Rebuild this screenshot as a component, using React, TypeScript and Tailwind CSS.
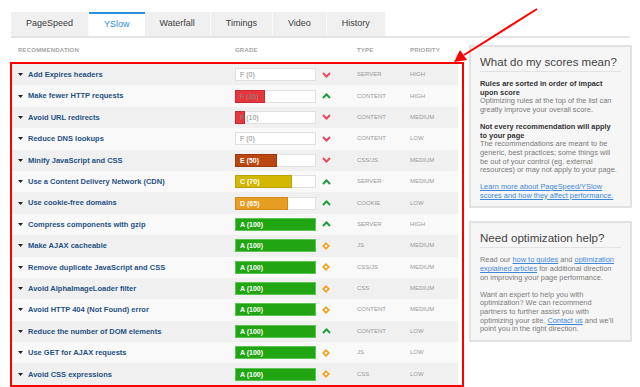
import React from 'react'

type Row = [string, string, number, 'up' | 'down' | 'diamond', string, string]

const rows: Row[] = [
  ['Add Expires headers', 'F', 0, 'down', 'SERVER', 'HIGH'],
  ['Make fewer HTTP requests', 'F', 36, 'up', 'CONTENT', 'HIGH'],
  ['Avoid URL redirects', 'F', 10, 'down', 'CONTENT', 'MEDIUM'],
  ['Reduce DNS lookups', 'F', 0, 'down', 'CONTENT', 'LOW'],
  ['Minify JavaScript and CSS', 'E', 50, 'down', 'CSS/JS', 'MEDIUM'],
  ['Use a Content Delivery Network (CDN)', 'C', 70, 'up', 'SERVER', 'MEDIUM'],
  ['Use cookie-free domains', 'D', 65, 'up', 'COOKIE', 'LOW'],
  ['Compress components with gzip', 'A', 100, 'up', 'SERVER', 'HIGH'],
  ['Make AJAX cacheable', 'A', 100, 'diamond', 'JS', 'MEDIUM'],
  ['Remove duplicate JavaScript and CSS', 'A', 100, 'diamond', 'CSS/JS', 'MEDIUM'],
  ['Avoid AlphaImageLoader filter', 'A', 100, 'diamond', 'CSS', 'MEDIUM'],
  ['Avoid HTTP 404 (Not Found) error', 'A', 100, 'diamond', 'CONTENT', 'MEDIUM'],
  ['Reduce the number of DOM elements', 'A', 100, 'up', 'CONTENT', 'LOW'],
  ['Use GET for AJAX requests', 'A', 100, 'diamond', 'JS', 'LOW'],
  ['Avoid CSS expressions', 'A', 100, 'diamond', 'CSS', 'LOW'],
]

const gradeColors: Record<string, string> = {
  F: 'bg-[#e8363c] border-[#c92a2f]',
  E: 'bg-[#b9470f] border-[#9c3a0a]',
  D: 'bg-[#e79d22] border-[#d18b15]',
  C: 'bg-[#d3b705] border-[#bca300]',
  A: 'bg-[#22a512] border-[#5cc452]',
}

const tabs = ['PageSpeed', 'YSlow', 'Waterfall', 'Timings', 'Video', 'History']

function TrendIcon({ kind }: { kind: Row[3] }) {
  if (kind === 'down')
    return (
      <svg width="9" height="6" viewBox="0 0 9 6">
        <path d="M1 1 L4.5 4.6 L8 1" stroke="#e8475d" strokeWidth="2" fill="none" />
      </svg>
    )
  if (kind === 'up')
    return (
      <svg width="9" height="6" viewBox="0 0 9 6">
        <path d="M1 5 L4.5 1.4 L8 5" stroke="#1e9a3c" strokeWidth="2" fill="none" />
      </svg>
    )
  return (
    <svg width="8" height="8" viewBox="0 0 8 8">
      <path d="M4 0 L8 4 L4 8 L0 4Z" fill="#f4a11c" />
      <circle cx="4" cy="4" r="1.3" fill="#fff" />
    </svg>
  )
}

function GradeBar({ grade, score }: { grade: string; score: number }) {
  return (
    <div className="relative w-[81px] h-[13px] bg-white border border-[#e0e0e0]">
      {score > 0 && (
        <div
          className={`absolute left-[-1px] top-[-1px] bottom-[-1px] border ${gradeColors[grade]}`}
          style={{ width: `calc(${score}% + 2px)` }}
        />
      )}
      <span
        className={`relative pl-[4px] text-[7px] leading-[11px] block ${
          score >= 50 ? 'text-white font-bold' : 'text-[#888]'
        }`}
      >
        {grade} ({score})
      </span>
    </div>
  )
}

export default function App() {
  return (
    <div className="relative w-[640px] h-[387px] overflow-hidden bg-white font-['Liberation_Sans',Arial,sans-serif]">
      <div className="pt-[12px] pl-[10px] pr-[8px]">
        {/* Tabs */}
        <div className="flex ml-[1px] mr-[2px] border-b-2 border-[#e4e4e4]">
          {tabs.map((t) =>
            t === 'YSlow' ? (
              <div
                key={t}
                className="h-[24px] px-[15px] flex items-center text-[9px] bg-white border-t-2 border-[#2b8fdc] text-[#2b8fdc]"
              >
                {t}
              </div>
            ) : (
              <div
                key={t}
                className="h-[24px] px-[15px] flex items-center text-[9px] bg-[#f0f0f0] text-[#3c3c3c] border-r border-[#fafafa]"
              >
                {t}
              </div>
            )
          )}
        </div>

        <div className="flex gap-[5px]">
          {/* Recommendations table */}
          <div className="w-[454px]">
            <div className="h-[24px] flex items-end pb-[7px] pl-[8px] text-[6px] font-bold text-[#a5a5a5] tracking-[0.2px]">
              <div className="w-[217px]">RECOMMENDATION</div>
              <div className="w-[122px]">GRADE</div>
              <div className="w-[53px]">TYPE</div>
              <div>PRIORITY</div>
            </div>
            <div className="border-2 border-[#ff0000] pr-[4px]">
              {rows.map(([name, grade, score, trend, type, prio], i) => (
                <div
                  key={name}
                  className={`h-[21.4px] flex items-center pl-[6px] ${
                    i % 2 === 0 ? 'bg-[#f0f0f0]' : 'bg-[#f9f9f9]'
                  }`}
                >
                  <div className="w-[10px] flex">
                    <svg width="5" height="3" viewBox="0 0 5 3">
                      <path d="M0 0 L5 0 L2.5 3Z" fill="#222" />
                    </svg>
                  </div>
                  <div className="w-[207px] text-[7.5px] font-bold text-[#1f5184]">{name}</div>
                  <GradeBar grade={grade} score={score} />
                  <div className="w-[41px] flex items-center pl-[6px]">
                    <TrendIcon kind={trend} />
                  </div>
                  <div className="w-[53px] text-[6px] text-[#9a9a9a]">{type}</div>
                  <div className="text-[6px] text-[#9a9a9a]">{prio}</div>
                </div>
              ))}
            </div>
          </div>

          {/* Sidebar */}
          <div className="w-[163px] mt-[7px] flex flex-col gap-[13px]">
            <div className="border-2 border-[#e2e2e2] bg-[#f6f6f6] px-[9px] pt-[8px] pb-[6px]">
              <div className="text-[11.5px] leading-[14px] text-[#444] pb-[2px] border-b border-[#e2e2e2]">
                What do my scores mean?
              </div>
              <div className="mt-[8px] text-[7.4px] leading-[8.7px]">
                <p className="font-bold text-[#333]">
                  Rules are sorted in order of impact
                  <br />
                  upon score
                </p>
                <p className="text-[#7a7a7a]">
                  Optimizing rules at the top of the list can
                  <br />
                  greatly improve your overall score.
                </p>
                <p className="font-bold text-[#333] mt-[8px]">
                  Not every recommendation will apply
                  <br />
                  to your page
                </p>
                <p className="text-[#7a7a7a]">
                  The recommendations are meant to be
                  <br />
                  generic, best practices; some things will
                  <br />
                  be out of your control (eg. external
                  <br />
                  resources) or may not apply to your page.
                </p>
                <p className="mt-[8px] text-[#3d87d6] underline">
                  Learn more about PageSpeed/YSlow
                  <br />
                  scores and how they affect performance.
                </p>
              </div>
            </div>

            <div className="border-2 border-[#e2e2e2] bg-[#f6f6f6] px-[9px] pt-[8px] pb-[6px]">
              <div className="text-[11.6px] leading-[14px] text-[#444] pb-[2px] border-b border-[#e2e2e2]">
                Need optimization help?
              </div>
              <div className="mt-[8px] text-[7.4px] leading-[8.7px] text-[#7a7a7a]">
                <p>
                  Read our <span className="text-[#3d87d6] underline">how to guides</span> and{' '}
                  <span className="text-[#3d87d6] underline">optimization</span>
                  <br />
                  <span className="text-[#3d87d6] underline">explained articles</span> for additional direction
                  <br />
                  on improving your page performance.
                </p>
                <p className="mt-[8px]">
                  Want an expert to help you with
                  <br />
                  optimization? We can recommend
                  <br />
                  partners to further assist you with
                  <br />
                  optimizing your site. <span className="text-[#3d87d6] underline">Contact us</span> and we'll
                  <br />
                  point you in the right direction.
                </p>
              </div>
            </div>
          </div>
        </div>
      </div>

      {/* Annotation arrow */}
      <svg className="absolute left-0 top-0 pointer-events-none" width="640" height="387">
        <line x1="537" y1="9" x2="464" y2="55" stroke="#ff0000" strokeWidth="2" />
        <path d="M454 62 L460 50 L467 60 Z" fill="#ff0000" />
      </svg>
    </div>
  )
}
